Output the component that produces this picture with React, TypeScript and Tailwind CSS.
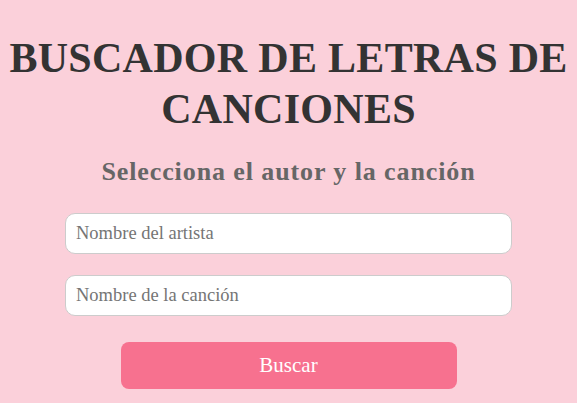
export default function App() {
  return (
    <div className="min-h-[403px] bg-[#fbd0da] flex flex-col items-center pt-[33px] font-['Liberation_Serif',serif]">
      <h1 className="text-center text-[42px] leading-[51px] font-bold tracking-[0.3px] text-[#333333]">
        BUSCADOR DE LETRAS DE CANCIONES
      </h1>
      <h2 className="mt-[21px] text-center text-[26px] leading-[32px] font-bold tracking-[0.9px] text-[#666666]">
        Selecciona el autor y la canción
      </h2>
      <form className="mt-[25px] w-[447px] flex flex-col items-center">
        <input
          type="text"
          placeholder="Nombre del artista"
          className="w-full h-[41px] rounded-[10px] border border-[#cccccc] bg-white px-[10px] text-[18.5px] text-[#333] placeholder:text-[#757575] outline-none"
        />
        <input
          type="text"
          placeholder="Nombre de la canción"
          className="mt-[21px] w-full h-[41px] rounded-[10px] border border-[#cccccc] bg-white px-[10px] text-[18.5px] text-[#333] placeholder:text-[#757575] outline-none"
        />
        <button
          type="button"
          className="mt-[26px] w-[336px] h-[47px] rounded-[8px] bg-[#f7718f] text-white text-[21px]"
        >
          Buscar
        </button>
      </form>
    </div>
  );
}
